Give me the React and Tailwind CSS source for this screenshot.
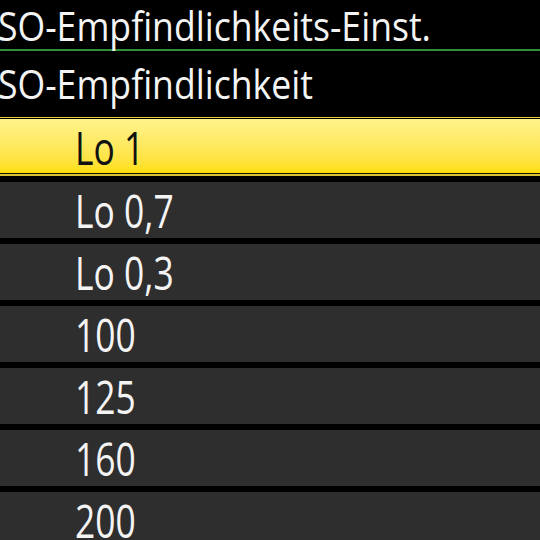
const items = ["Lo 0,7", "Lo 0,3", "100", "125", "160", "200"];

const Row = ({ label }) => (
  <div className="h-[56px] shrink-0 bg-[#2e2e2e] flex items-center pl-[75px]">
    <span className="inline-block origin-left scale-x-[0.77] text-[46px] leading-none text-[#f4f4f4] whitespace-nowrap">
      {label}
    </span>
  </div>
);

export default function App() {
  return (
    <div
      className="w-[540px] h-[540px] bg-black overflow-hidden flex flex-col"
      style={{ fontFamily: '"Open Sans", "Noto Sans", sans-serif' }}
    >
      <div className="h-[49px] shrink-0 flex items-center pt-[2px]">
        <span className="inline-block origin-left scale-x-[0.89] ml-[-12px] text-[40px] leading-none text-[#f4f4f4] whitespace-nowrap">
          ISO-Empfindlichkeits-Einst.
        </span>
      </div>
      <div className="h-[2px] shrink-0 bg-[#2f8f3a]" />
      <div className="h-[64px] shrink-0 flex items-center pt-[2px]">
        <span className="inline-block origin-left scale-x-[0.89] ml-[-12px] text-[40px] leading-none text-[#f4f4f4] whitespace-nowrap">
          ISO-Empfindlichkeit
        </span>
      </div>
      <div className="h-[2px] shrink-0" />

      {/* selected row */}
      <div className="shrink-0 border-t border-[#e8d23a] bg-black pt-px">
        <div className="h-[54px] bg-linear-to-b from-[#fff28a] to-[#ffdf00] flex items-center pl-[75px] pt-[2px]">
          <span className="inline-block origin-left scale-x-[0.77] text-[46px] leading-none text-[#111] whitespace-nowrap">
            Lo 1
          </span>
        </div>
        <div className="h-px bg-[#1a1400]" />
        <div className="h-[2px] bg-[#d9c234]" />
      </div>

      <div className="shrink-0 flex flex-col gap-[6px] pt-[6px]">
        {items.map((label) => (
          <Row key={label} label={label} />
        ))}
      </div>
    </div>
  );
}
